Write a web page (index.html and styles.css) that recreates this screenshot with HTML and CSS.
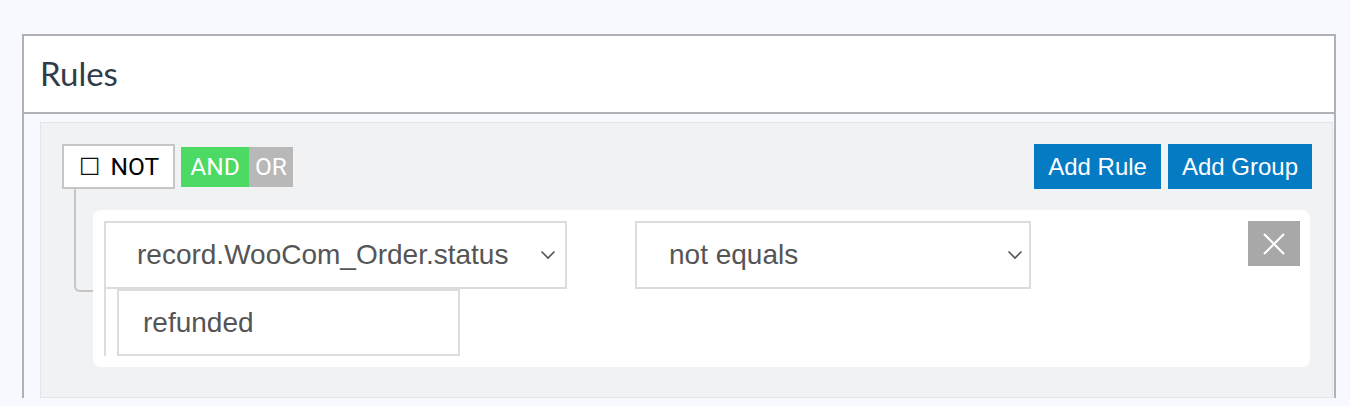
FILE: index.html
```html
<!DOCTYPE html>
<html>
<head>
<meta charset="utf-8">
<link rel="stylesheet" href="styles.css">
</head>
<body>
<div class="panel">
  <div class="panel-head">Rules</div>
  <div class="panel-body">
    <div class="group">
      <div class="group-head">
        <div class="conds">
          <label class="not-box"><span class="chk">☐</span>NOT</label>
          <div class="toggle">
            <span class="tg on">AND</span><span class="tg off">OR</span>
          </div>
        </div>
        <div class="actions">
          <button class="btn">Add Rule</button>
          <button class="btn">Add Group</button>
        </div>
      </div>
      <div class="rules">
        <div class="rule-card">
          <div class="rule-top">
            <div class="sel field"><span>record.WooCom_Order.status</span>
              <svg class="chev" width="16" height="10" viewBox="0 0 16 10"><path d="M1.5 1.5 L8 8 L14.5 1.5" fill="none" stroke="#555" stroke-width="1.6"/></svg>
            </div>
            <div class="sel op"><span>not equals</span>
              <svg class="chev" width="16" height="10" viewBox="0 0 16 10"><path d="M1.5 1.5 L8 8 L14.5 1.5" fill="none" stroke="#555" stroke-width="1.6"/></svg>
            </div>
            <button class="del">
              <svg width="22" height="22" viewBox="0 0 22 22"><path d="M1 1 L21 21 M21 1 L1 21" stroke="#fff" stroke-width="2.2"/></svg>
            </button>
          </div>
          <div class="value-wrap">
            <div class="value">refunded</div>
          </div>
        </div>
      </div>
    </div>
  </div>
</div>
</body>
</html>
```
FILE: styles.css
```css
* { box-sizing: border-box; }
body {
  margin: 0;
  background: #f8f9fe;
  padding: 34px 14px 0 22px;
  font-family: "Liberation Sans", Arial, sans-serif;
}
.panel {
  border: 2px solid #b0b1b6;
  border-bottom: none;
  background: #f8f9fe;
}
.panel-head {
  height: 78px;
  background: #fff;
  border-bottom: 2px solid #b0b1b6;
  padding-left: 16px;
  display: flex;
  align-items: center;
  font-family: "Lato", sans-serif;
  font-size: 33px;
  color: #2f3b47;
  padding-bottom: 3px;
}
.panel-body {
  padding: 8px 1px 0 16px;
}
.group {
  background: #f1f2f4;
  border: 1px solid #e4e5e8;
  padding: 21px 20px 30px 21px;
}
.group-head {
  display: flex;
  justify-content: space-between;
  align-items: flex-start;
}
.conds {
  display: flex;
  align-items: center;
  gap: 6px;
}
.not-box {
  display: flex;
  align-items: center;
  width: 113px;
  height: 45px;
  border: 2px solid #c6c6c6;
  background: #fff;
  padding-left: 15px;
  font-size: 24.5px;
  color: #000;
  font-family: "Roboto", "Liberation Sans", sans-serif;
}
.chk {
  font-family: "DejaVu Sans", sans-serif;
  font-size: 24px;
  margin-right: 10px;
  color: #111;
}
.toggle {
  display: flex;
  height: 40px;
}
.tg {
  display: flex;
  align-items: center;
  justify-content: center;
  color: #fff;
  font-size: 24.5px;
  font-family: "Roboto", "Liberation Sans", sans-serif;
}
.tg.on { background: #4cd964; width: 68px; }
.tg.off { background: #b8b8b8; width: 44px; }
.actions {
  display: flex;
  gap: 7px;
}
.btn {
  height: 45px;
  border: none;
  background: #057bc4;
  color: #fff;
  font-family: "Liberation Sans", Arial, sans-serif;
  font-size: 24px;
  padding: 0 14px;
}
.rules {
  position: relative;
  margin-top: 21px;
  padding-left: 31px;
  padding-right: 2px;
}
.rules::before {
  content: "";
  position: absolute;
  left: 12px;
  top: -21px;
  width: 19px;
  height: 101px;
  border-left: 2px solid #c6c6c6;
  border-bottom: 2px solid #c6c6c6;
  border-bottom-left-radius: 6px;
}
.rule-card {
  position: relative;
  background: #fff;
  border-radius: 8px;
  padding: 11px 10px 11px 11px;
  height: 157px;
}
.rule-top {
  display: flex;
  align-items: flex-start;
}
.sel {
  height: 68px;
  border: 2px solid #dcdcdc;
  display: flex;
  align-items: center;
  justify-content: space-between;
  font-size: 28px;
  color: #555;
  background: #fff;
}
.sel.field {
  width: 463px;
  padding: 0 9px 0 31px;
}
.sel.op {
  width: 396px;
  margin-left: 68px;
  padding: 0 6px 0 32px;
}
.chev { flex: none; }
.del {
  margin-left: auto;
  width: 52px;
  height: 45px;
  border: none;
  background: #a8a8a8;
  display: flex;
  align-items: center;
  justify-content: center;
  padding: 0;
}
.value-wrap {
  border-left: 2px solid #dcdcdc;
  padding-left: 11px;
  height: 67px;
}
.value {
  width: 343px;
  height: 67px;
  border: 2px solid #dcdcdc;
  display: flex;
  align-items: center;
  padding-left: 24px;
  font-size: 28px;
  color: #555;
}
```
